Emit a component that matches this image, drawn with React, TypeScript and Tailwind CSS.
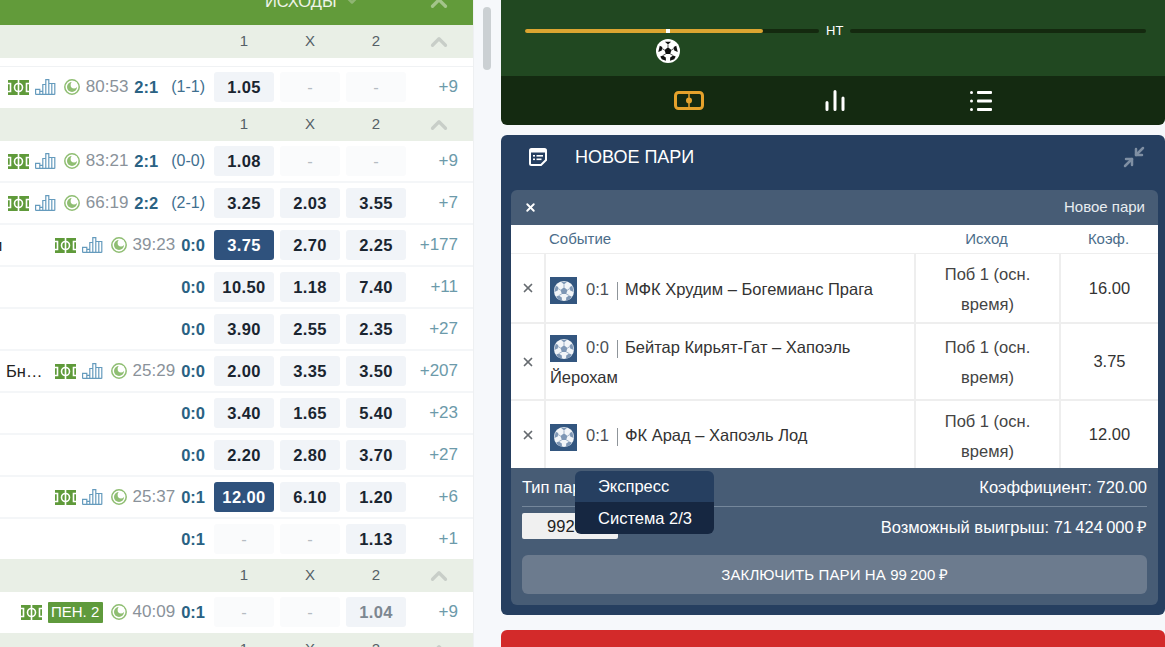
import { ChevronDown, ChevronUp, Minimize2, X } from 'lucide-react';

interface Match {
  name?: string;
  nameClass?: string;
  time?: string;
  score: string;
  half?: string;
  odds: string[];
  more: string;
  picked?: boolean;
  dimmed?: boolean;
  penalty?: string;
  height?: string;
}

const group1: Match[] = [
  { time: '80:53', score: '2:1', half: '(1-1)', odds: ['1.05', '-', '-'], more: '+9', height: 'h-[41px]' },
];

const group2: Match[] = [
  { time: '83:21', score: '2:1', half: '(0-0)', odds: ['1.08', '-', '-'], more: '+9' },
  { time: '66:19', score: '2:2', half: '(2-1)', odds: ['3.25', '2.03', '3.55'], more: '+7' },
  { name: 'м', nameClass: '-ml-[9px]', time: '39:23', score: '0:0', odds: ['3.75', '2.70', '2.25'], more: '+177', picked: true },
  { score: '0:0', odds: ['10.50', '1.18', '7.40'], more: '+11' },
  { score: '0:0', odds: ['3.90', '2.55', '2.35'], more: '+27' },
  { name: 'Бн…', nameClass: 'ml-[6px]', time: '25:29', score: '0:0', odds: ['2.00', '3.35', '3.50'], more: '+207' },
  { score: '0:0', odds: ['3.40', '1.65', '5.40'], more: '+23' },
  { score: '0:0', odds: ['2.20', '2.80', '3.70'], more: '+27' },
  { time: '25:37', score: '0:1', odds: ['12.00', '6.10', '1.20'], more: '+6', picked: true },
  { score: '0:1', odds: ['-', '-', '1.13'], more: '+1', height: 'h-10' },
];

const group3: Match[] = [
  { time: '40:09', score: '0:1', odds: ['-', '-', '1.04'], more: '+9', penalty: 'ПЕН. 2', dimmed: true, height: 'h-[41px]' },
];

function FieldIcon() {
  return (
    <svg width="21" height="15" viewBox="0 0 21 15" className="shrink-0">
      <rect width="21" height="15" fill="#5f9a3a" />
      <g fill="none" stroke="#fff" strokeWidth="1.6">
        <path d="M0 3.5h2.5v8H0M21 3.5h-2.5v8H21M10.5 0v15" />
        <circle cx="10.5" cy="7.5" r="4" />
      </g>
    </svg>
  );
}

function ChartIcon() {
  return (
    <svg width="21" height="16" viewBox="0 0 21 16" className="shrink-0" fill="none" stroke="#659bbd" strokeWidth="1.2">
      <path d="M.6 15.4v-5h4.2v5M4.8 15.4v-3h3v3M7.8 15.4V5.5h3v9.9M10.8 15.4V.6h3v14.8M13.8 15.4V4.5h6v10.9M16.8 4.5v10.9M.6 15.4h19.2" />
    </svg>
  );
}

function ClockIcon() {
  return (
    <svg width="16" height="16" viewBox="0 0 16 16" className="shrink-0">
      <circle cx="8" cy="8" r="7.2" fill="none" stroke="#8fbe72" strokeWidth="1.5" />
      <circle cx="8" cy="8" r="5" fill="#8fbe72" />
      <circle cx="10" cy="6" r="3.4" fill="#fff" />
    </svg>
  );
}

function Ball({ size, light, dark }: { size: number; light: string; dark: string }) {
  return (
    <svg width={size} height={size} viewBox="0 0 24 24" className="shrink-0">
      <circle cx="12" cy="12" r="11" fill={light} />
      <g fill={dark}>
        <polygon points="12,8 15.8,10.8 14.4,15.2 9.6,15.2 8.2,10.8" />
        <polygon points="8.6,2 15.4,2 12,5" />
        <polygon points="21,6.4 22.6,13 18.8,11.4 18.2,7.6" />
        <polygon points="3,6.4 1.4,13 5.2,11.4 5.8,7.6" />
        <polygon points="18.8,21 14.2,22.6 14.4,19 17.6,16.8 20.4,18" />
        <polygon points="5.2,21 9.8,22.6 9.6,19 6.4,16.8 3.6,18" />
      </g>
      <g stroke={dark} strokeWidth="0.8">
        <path d="M12 8V5M15.8 10.8l3-1.6M14.4 15.2l3 1.6M9.6 15.2l-3 1.6M8.2 10.8l-3-1.6" />
      </g>
    </svg>
  );
}

function OddButton({ value, picked, dimmed }: { value: string; picked?: boolean; dimmed?: boolean }) {
  if (value === '-') {
    return (
      <div className="w-[60px] h-[30px] rounded-[3px] bg-[#fafbfc] flex items-center justify-center text-[#b5bcc2]">
        -
      </div>
    );
  }
  return (
    <div
      className={
        picked
          ? 'w-[60px] h-[30px] rounded-[3px] bg-[#2f527d] flex items-center justify-center font-bold text-[16.5px] text-white tracking-[0.4px]'
          : dimmed
            ? 'w-[60px] h-[30px] rounded-[3px] bg-[#f1f4f8] flex items-center justify-center font-bold text-[16.5px] text-[#7d8791] tracking-[0.4px]'
            : 'w-[60px] h-[30px] rounded-[3px] bg-[#f1f4f8] flex items-center justify-center font-bold text-[16.5px] text-[#1a2530] tracking-[0.4px]'
      }
    >
      {value}
    </div>
  );
}

function MatchRow({ match }: { match: Match }) {
  return (
    <div className={`flex shrink-0 pt-[5px] bg-white ${match.height ?? 'h-[42px] border-b-2 border-[#f4f6f8]'}`}>
      <div className="flex-1 min-w-0 flex items-center justify-end h-[30px] pr-[9px] whitespace-nowrap">
        {match.name && <span className={`mr-auto text-[#222] ${match.nameClass}`}>{match.name}</span>}
        {match.time && (
          <>
            {match.penalty ? (
              <>
                <FieldIcon />
                <span className="ml-[6px] h-[21px] w-[55px] bg-[#5f9a3c] rounded-[1px] text-white text-[15px] flex items-center justify-center">
                  {match.penalty}
                </span>
              </>
            ) : (
              <>
                <FieldIcon />
                <span className="ml-[6px]">
                  <ChartIcon />
                </span>
              </>
            )}
            <span className="ml-[8px]">
              <ClockIcon />
            </span>
            <span className="ml-[6px] text-[17px] text-[#8a929a]">{match.time}</span>
          </>
        )}
        <span className="ml-[6px] font-bold text-[16.5px] text-[#2a6283]">{match.score}</span>
        {match.half && <span className="ml-[13px] text-[16px] text-[#3f6f8f]">{match.half}</span>}
      </div>
      <div className="flex gap-[6px] h-[30px]">
        {match.odds.map((odd, i) => (
          <OddButton key={i} value={odd} picked={match.picked && i === 0} dimmed={match.dimmed && i === 2} />
        ))}
      </div>
      <div className="w-[67px] h-[30px] pr-[15px] flex items-center justify-end text-[17px] text-[#6c9aaa]">{match.more}</div>
    </div>
  );
}

function GroupHead() {
  return (
    <div className="flex items-center h-[33px] bg-[#e9efe6] text-[#555f66] text-[15px] shrink-0">
      <div className="w-[214px]" />
      <div className="flex gap-[6px]">
        <span className="w-[60px] text-center">1</span>
        <span className="w-[60px] text-center">X</span>
        <span className="w-[60px] text-center">2</span>
      </div>
      <div className="flex-1 flex justify-end pr-[21px]">
        <ChevronUp size={26} strokeWidth={3} className="text-[#c8cec8]" />
      </div>
    </div>
  );
}

function Slip({ score, title, coef, height, shift }: { score: string; title: string; coef: string; height: string; shift: string }) {
  return (
    <div className={`grid grid-cols-[35px_370px_145px_1fr] border-b-2 border-[#eeeeee] last:border-b-0 ${height}`}>
      <div className="flex items-center justify-center border-r-2 border-[#eeeeee]">
        <X size={14} strokeWidth={3} className="text-[#666b70]" />
      </div>
      <div className={`flex items-center pl-[4px] border-r-2 border-[#eeeeee] ${shift}`}>
        <div className="leading-[30px] text-[#333]">
          <span className="inline-flex w-[27px] h-[27px] items-center justify-center bg-[#33567f] align-middle">
            <Ball size={22} light="#f2f5f8" dark="#7e97b5" />
          </span>
          <span className="ml-[9px] text-[#4a4f55]">{score}</span>
          <span className="inline-block w-px h-[18px] ml-[8px] mr-[7px] bg-[#8f959a] align-middle" />
          {title}
        </div>
      </div>
      <div className={`flex items-center justify-center text-center leading-[30px] text-[#444] border-r-2 border-[#eeeeee] px-[20px] ${shift}`}>
        Поб 1 (осн. время)
      </div>
      <div className="flex items-center justify-center text-[#333]">{coef}</div>
    </div>
  );
}

export default function App() {
  const slips = [
    { score: '0:1', title: 'МФК Хрудим – Богемианс Прага', coef: '16.00', height: 'h-[70px]', shift: 'pt-[2px]' },
    { score: '0:0', title: 'Бейтар Кирьят-Гат – Хапоэль Йерохам', coef: '3.75', height: 'h-[77px]', shift: 'pt-px' },
    { score: '0:1', title: 'ФК Арад – Хапоэль Лод', coef: '12.00', height: 'h-[67px]', shift: 'pt-[2px]' },
  ];

  return (
    <div className="flex h-[647px] overflow-hidden bg-[#f6f8fb] font-['Liberation_Sans',Arial,sans-serif] text-[16.5px]">
      {/* left column, scrolled list of matches */}
      <div className="w-[474px] shrink-0 flex flex-col bg-white border-r border-[#eef0f2] overflow-hidden">
        <div className="flex h-[25px] bg-[#629b3a] shrink-0 overflow-hidden text-white">
          <div className="w-[265px]" />
          <span className="-mt-[11px] h-[20px] text-[16.5px] text-[#eef4e8]">ИСХОДЫ</span>
          <ChevronDown size={20} strokeWidth={3} className="ml-[5px] -mt-[10px] text-[#8fb573]" />
          <div className="flex-1 flex justify-end pr-[21px]">
            <ChevronUp size={26} strokeWidth={3} className="-mt-[10px] text-[#a3c48a]" />
          </div>
        </div>
        <GroupHead />
        <div className="h-[9px] border-b border-[#f0f2f4] shrink-0" />
        {group1.map((m, i) => (
          <MatchRow key={i} match={m} />
        ))}
        <GroupHead />
        {group2.map((m, i) => (
          <MatchRow key={i} match={m} />
        ))}
        <GroupHead />
        {group3.map((m, i) => (
          <MatchRow key={i} match={m} />
        ))}
        <GroupHead />
      </div>

      {/* scrollbar */}
      <div className="w-[27px] shrink-0 pl-[9px] pt-[7px]">
        <div className="w-2 h-[63px] rounded bg-[#cbd0d3]" />
      </div>

      <div className="flex-1 min-w-0 flex flex-col">
        {/* match tracker */}
        <div className="h-[125px] shrink-0 rounded-b-md overflow-hidden flex flex-col">
          <div className="h-[76px] bg-[#214821] pl-[24px] pr-[19px] pt-[22px]">
            <div className="flex items-center gap-[7px] h-[18px] text-white text-[13px]">
              <div className="relative w-[294px] h-1 rounded bg-[#14290f]">
                <div className="w-[238px] h-1 rounded bg-[#dba531]" />
                <div className="absolute left-[141px] top-0 w-[4px] h-1 bg-white" />
                <div className="absolute left-[131px] top-[10px] rounded-full bg-white p-px">
                  <Ball size={22} light="#ffffff" dark="#111111" />
                </div>
              </div>
              <span>НТ</span>
              <div className="flex-1 h-1 rounded bg-[#14290f]" />
            </div>
          </div>
          <div className="h-[49px] bg-[#142a11] flex items-center justify-center pl-[4px]">
            <div className="w-[146px] flex justify-center">
              <svg width="30" height="19" viewBox="0 0 30 19" fill="none" stroke="#e5a22c">
                <rect x="1.5" y="1.5" width="27" height="16" rx="3" strokeWidth="3" />
                <path d="M15 2v15" strokeWidth="1.5" />
                <circle cx="15" cy="9.5" r="3" fill="#e5a22c" strokeWidth="0" />
              </svg>
            </div>
            <div className="w-[146px] flex justify-center">
              <svg width="20" height="21" viewBox="0 0 20 21" fill="none" stroke="#fff" strokeWidth="3" strokeLinecap="round">
                <path d="M2 19.5v-7M10 19.5V1.5M18 19.5V8" />
              </svg>
            </div>
            <div className="w-[146px] flex justify-center">
              <svg width="22" height="20" viewBox="0 0 22 20" fill="#fff">
                <rect x="0" y="0" width="3" height="3" rx="1.5" />
                <rect x="0" y="8.5" width="3" height="3" rx="1.5" />
                <rect x="0" y="17" width="3" height="3" rx="1.5" />
                <rect x="7" y="0" width="15" height="3" rx="1" />
                <rect x="7" y="8.5" width="15" height="3" rx="1" />
                <rect x="7" y="17" width="15" height="3" rx="1" />
              </svg>
            </div>
          </div>
        </div>

        {/* bet slip */}
        <div className="mt-[10px] h-[480px] shrink-0 rounded-md bg-[#263f60] pl-[10px] pr-[7px] flex flex-col">
          <div className="h-[55px] flex items-center text-white shrink-0 pb-[11px]">
            <svg width="18" height="18" viewBox="0 0 18 18" className="ml-[18px]" fill="none">
              <path d="M2.5 1h13A1.5 1.5 0 0 1 17 2.5V12l-5 5H2.5A1.5 1.5 0 0 1 1 15.5v-13A1.5 1.5 0 0 1 2.5 1z" stroke="#fff" strokeWidth="2" />
              <rect x="1" y="1" width="16" height="3.5" fill="#fff" />
              <g fill="#fff">
                <rect x="4" y="7" width="2" height="1.6" />
                <rect x="7.5" y="7" width="6.5" height="1.6" />
                <rect x="4" y="10.5" width="2" height="1.6" />
                <rect x="7.5" y="10.5" width="5" height="1.6" />
              </g>
            </svg>
            <span className="ml-[28px] text-[18px]">НОВОЕ ПАРИ</span>
            <Minimize2 size={24} strokeWidth={2.5} className="ml-auto mr-[12px] text-[#7f8fa3]" />
          </div>

          <div className="h-[415px] rounded-md bg-[#475c75] overflow-hidden flex flex-col">
            <div className="h-[35px] shrink-0 flex items-center justify-between pl-[13px] pr-[13px] text-white">
              <X size={13} strokeWidth={3.5} />
              <span className="text-[15px] text-[#e8ecf0]">Новое пари</span>
            </div>

            <div className="bg-white h-[243px] shrink-0 flex flex-col">
              <div className="grid grid-cols-[35px_370px_145px_1fr] h-[29px] items-center text-[15px] text-[#4b6d8a] border-b border-[#eeeeee] shrink-0">
                <span />
                <span className="pl-[3px]">Событие</span>
                <span className="text-center pr-[4px]">Исход</span>
                <span className="text-center pr-[2px]">Коэф.</span>
              </div>
              {slips.map((s) => (
                <Slip key={s.title} {...s} />
              ))}
            </div>

            <div className="relative px-[11px] text-white flex-1">
              <div className="flex items-center justify-between h-[39px] border-b border-[#75879b]">
                <span>Тип пари</span>
                <span>Коэффициент: 720.00</span>
              </div>
              <div className="flex items-start justify-between pt-[6px] h-[48px]">
                <div className="w-[96px] h-[26px] rounded-[2px] bg-[#f0f0f0] text-[#222] flex items-center justify-center">
                  99200
                </div>
                <span className="mt-[2px]">Возможный выигрыш: 71&thinsp;424&thinsp;000&thinsp;₽</span>
              </div>
              <div className="h-[39px] rounded-md bg-[#6c7b8e] flex items-center justify-center pt-px text-[15px] tracking-[0.1px]">
                ЗАКЛЮЧИТЬ ПАРИ НА 99&thinsp;200&thinsp;₽
              </div>

              {/* open type dropdown */}
              <div className="absolute left-[64px] top-[3px] w-[139px] rounded-md overflow-hidden">
                <div className="h-[31px] bg-[#263f60] pl-[23px] flex items-center">Экспресс</div>
                <div className="h-[32px] bg-[#162741] pl-[23px] pt-px flex items-center">Система 2/3</div>
              </div>
            </div>
          </div>
        </div>

        <div className="mt-[15px] flex-1 rounded-t-md bg-[#d32a2a]" />
      </div>
    </div>
  );
}
